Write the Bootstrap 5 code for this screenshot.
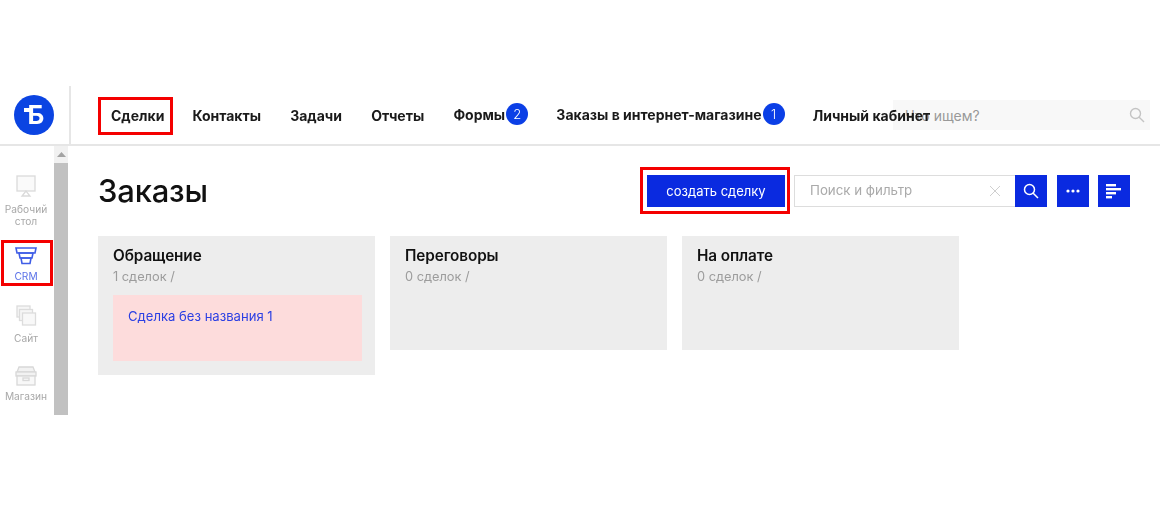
<!DOCTYPE html>
<html lang="ru">
<head>
<meta charset="utf-8">
<title>Заказы</title>
<link href="https://cdn.jsdelivr.net/npm/bootstrap@5.3.0/dist/css/bootstrap.min.css" rel="stylesheet">
<style>
html,body{background:#fff;}
body{font-family:"Inter","Noto Sans",sans-serif;color:#111;overflow:hidden;height:505px;}
.shot{margin-top:86px;height:329px;overflow:hidden;filter:blur(.35px);}
.head-row{height:60px;border-bottom:2px solid #e6e6e6;position:relative;}
.logo-cell{width:71px;border-right:2px solid #e6e6e6;padding-right:1px;}
.logo-disc{width:40px;height:40px;background:#0b44e2;color:#fff;font-weight:700;font-size:26px;line-height:1;position:relative;}
.logo-glyph{position:relative;left:2px;}
.logo-glyph::before{content:"";position:absolute;left:-4px;top:6px;width:6px;height:3.5px;background:#fff;}
.top-nav{padding-left:27px;gap:29.2px;height:58px;}
.top-link{font-size:14px;font-weight:650;color:#1a1a1a;text-decoration:none;white-space:nowrap;letter-spacing:0;position:relative;z-index:1;}
.top-link.framed{border:3px solid #f40000;padding:7px 6px 7px 10px;margin-right:-10.2px;height:38px;line-height:18px;margin-top:2px;}
.num-dot{width:22px;height:22px;background:#0b3fe6;color:#fff;font-size:13px;font-weight:300;line-height:22px;text-align:center;display:inline-block;border-radius:50%;margin-left:1px;margin-right:-1px;position:relative;top:-1px;letter-spacing:0;}
.ask-box{position:absolute;left:893px;top:14px;width:257px;height:30px;background:#f8f8f8;color:#999;font-size:14px;padding:0 5px 0 12px;}
.body-row{height:269px;}
.side-col{width:52px;margin-right:2px;flex:none;text-align:center;}
.side-item{font-size:10.2px;line-height:12px;color:#a8a8a8;}
.side-item svg{display:block;margin:0 auto;}
.side-first{padding:29px 0 0 0;height:94px;}
.side-crm{border:3px solid #f40000;width:52px;height:46px;margin-left:1px;color:#5b72e8;padding:4px 2px 0 0;}
.side-crm svg{margin-bottom:5px;}
.side-site{padding-top:19px;height:60px;}
.side-shop{padding-top:20px;}
.side-item span{display:block;}
.scroll-col{width:14px;flex:none;background:#f1f1f1;}
.scroll-up{height:17px;}
.scroll-thumb{background:#c1c1c1;height:252px;}
.main-col{padding:21px 30px 0 28px;margin-left:2px;}
.title-row{height:47px;margin-bottom:22px;}
.page-title{font-size:31px;font-weight:500;margin:0;letter-spacing:-.2px;}
.btn-frame{border:3px solid #f40000;padding:5px 2px 4px 4px;margin-right:4px;height:47px;}
.blue-btn{background:#0a2ae0;border:1px solid #0a2ae0;color:#fff;border-radius:0;height:32px;font-size:13px;padding:0;display:flex;align-items:center;justify-content:center;}
.blue-btn:hover{background:#0a2ae0;color:#fff;}
.create-btn{width:138px;padding-top:1px;}
.square-btn{width:32px;flex:none;}
.gap-dots{margin-left:10px;}
.gap-sort{margin-left:9px;}
.find-box{width:221px;height:32px;border:1px solid #ddd;border-right:0;color:#aaa;font-size:13.3px;padding:1px 14px 0 15px;}
.stage-row{gap:15px;}
.stage{width:277px;background:#ededed;padding:11px 15px;}
.stage.tall{height:139px;}
.stage.low{height:114px;}
.stage-name{font-size:15.3px;font-weight:600;line-height:18px;letter-spacing:-.1px;}
.stage-sub{font-size:12.8px;line-height:18px;color:#9c9c9c;margin-top:3px;}
.deal{width:249px;height:66px;background:#fddcdc;margin-top:9px;padding:12px 15px;font-size:13.1px;line-height:18px;color:#2b3fe3;}
</style>
</head>
<body>
<div class="shot">
  <div class="head-row d-flex">
    <div class="logo-cell d-flex align-items-center justify-content-center">
      <div class="logo-disc rounded-circle d-flex align-items-center justify-content-center"><span class="logo-glyph">Б</span></div>
    </div>
    <nav class="top-nav d-flex align-items-center">
      <a class="top-link framed" href="#">Сделки</a>
      <a class="top-link" href="#">Контакты</a>
      <a class="top-link" href="#">Задачи</a>
      <a class="top-link" href="#">Отчеты</a>
      <a class="top-link" href="#">Формы<span class="num-dot">2</span></a>
      <a class="top-link" href="#">Заказы в интернет-магазине<span class="num-dot">1</span></a>
      <a class="top-link" href="#">Личный кабинет</a>
    </nav>
    <div class="ask-box d-flex align-items-center justify-content-between">
      <span>Что ищем?</span>
      <svg width="16" height="16" viewBox="0 0 16 16" fill="none" stroke="#c4c4c4" stroke-width="1.4"><circle cx="6.5" cy="6.5" r="5"/><path d="M10.2 10.2 15 15"/></svg>
    </div>
  </div>
  <div class="body-row d-flex">
    <div class="side-col">
      <div class="side-item side-first">
        <svg width="22" height="24" viewBox="0 0 22 24" fill="none" stroke="#dadada" stroke-width="1.3"><rect x="2" y="1" width="18" height="15" fill="#fafafa"/><path d="M11 16 7 21h8Z"/></svg>
        <span class="mt-1">Рабочий стол</span>
      </div>
      <div class="side-item side-crm">
        <svg width="22" height="18" viewBox="0 0 22 18" fill="none" stroke="#3f5de6" stroke-width="1.6"><path d="M1 1h20l-1 5H2Z"/><path d="M4 6h14l-1 5H5Z"/><path d="M6 11h10l-1 5.5H7Z"/></svg>
        <span>CRM</span>
      </div>
      <div class="side-item side-site">
        <svg width="22" height="23" viewBox="0 0 22 23" fill="none" stroke="#dcdcdc" stroke-width="1.3"><rect x="2" y="1" width="13" height="11" fill="#f6f6f6"/><rect x="4.5" y="4.5" width="13" height="11" fill="#f6f6f6"/><rect x="7.5" y="8" width="13" height="12" fill="#f8f8f8"/></svg>
        <span class="mt-1">Сайт</span>
      </div>
      <div class="side-item side-shop">
        <svg width="22" height="20" viewBox="0 0 22 20" fill="none" stroke="#d8d8d8" stroke-width="1.3"><path d="M4 1h14l2 5H2Z" fill="#f2f2f2"/><rect x="1" y="6" width="20" height="4" fill="#f2f2f2"/><rect x="2" y="10" width="18" height="9" fill="#f8f8f8"/><rect x="8" y="12" width="6" height="2.5"/></svg>
        <span class="mt-1">Магазин</span>
      </div>
    </div>
    <div class="scroll-col">
      <div class="scroll-up d-flex align-items-center justify-content-center">
        <svg width="9" height="5" viewBox="0 0 9 5"><path d="M0 5 4.5 0 9 5Z" fill="#a3a3a3"/></svg>
      </div>
      <div class="scroll-thumb"></div>
    </div>
    <main class="main-col flex-grow-1">
      <div class="title-row d-flex align-items-center">
        <h1 class="page-title me-auto">Заказы</h1>
        <div class="btn-frame">
          <button class="btn blue-btn create-btn" type="button">создать сделку</button>
        </div>
        <div class="find-box d-flex align-items-center justify-content-between">
          <span>Поиск и фильтр</span>
          <svg width="12" height="12" viewBox="0 0 12 12" stroke="#cfcfcf" stroke-width="1"><path d="M1 1l10 10M11 1 1 11"/></svg>
        </div>
        <button class="btn blue-btn square-btn" type="button" aria-label="Поиск">
          <svg width="16" height="16" viewBox="0 0 16 16" fill="none" stroke="#fff" stroke-width="1.5"><circle cx="6.5" cy="6.5" r="5"/><path d="M10.2 10.2 15 15"/></svg>
        </button>
        <button class="btn blue-btn square-btn gap-dots" type="button" aria-label="Ещё">
          <svg width="14" height="4" viewBox="0 0 14 4" fill="#fff"><circle cx="2" cy="2" r="1.6"/><circle cx="7" cy="2" r="1.6"/><circle cx="12" cy="2" r="1.6"/></svg>
        </button>
        <button class="btn blue-btn square-btn gap-sort" type="button" aria-label="Вид">
          <svg width="16" height="16" viewBox="0 0 16 16" fill="#fff"><rect y="1" width="10" height="2.4"/><rect y="5" width="15" height="2.4"/><rect y="9" width="10" height="2.4"/><rect y="13" width="6" height="2.4"/></svg>
        </button>
      </div>
      <div class="stage-row d-flex align-items-start">
        <section class="stage tall">
          <div class="stage-name">Обращение</div>
          <div class="stage-sub">1 сделок /</div>
          <div class="deal">Сделка без названия 1</div>
        </section>
        <section class="stage low">
          <div class="stage-name">Переговоры</div>
          <div class="stage-sub">0 сделок /</div>
        </section>
        <section class="stage low">
          <div class="stage-name">На оплате</div>
          <div class="stage-sub">0 сделок /</div>
        </section>
      </div>
    </main>
  </div>
</div>
<script src="https://cdn.jsdelivr.net/npm/bootstrap@5.3.0/dist/js/bootstrap.bundle.min.js"></script>
</body>
</html>
